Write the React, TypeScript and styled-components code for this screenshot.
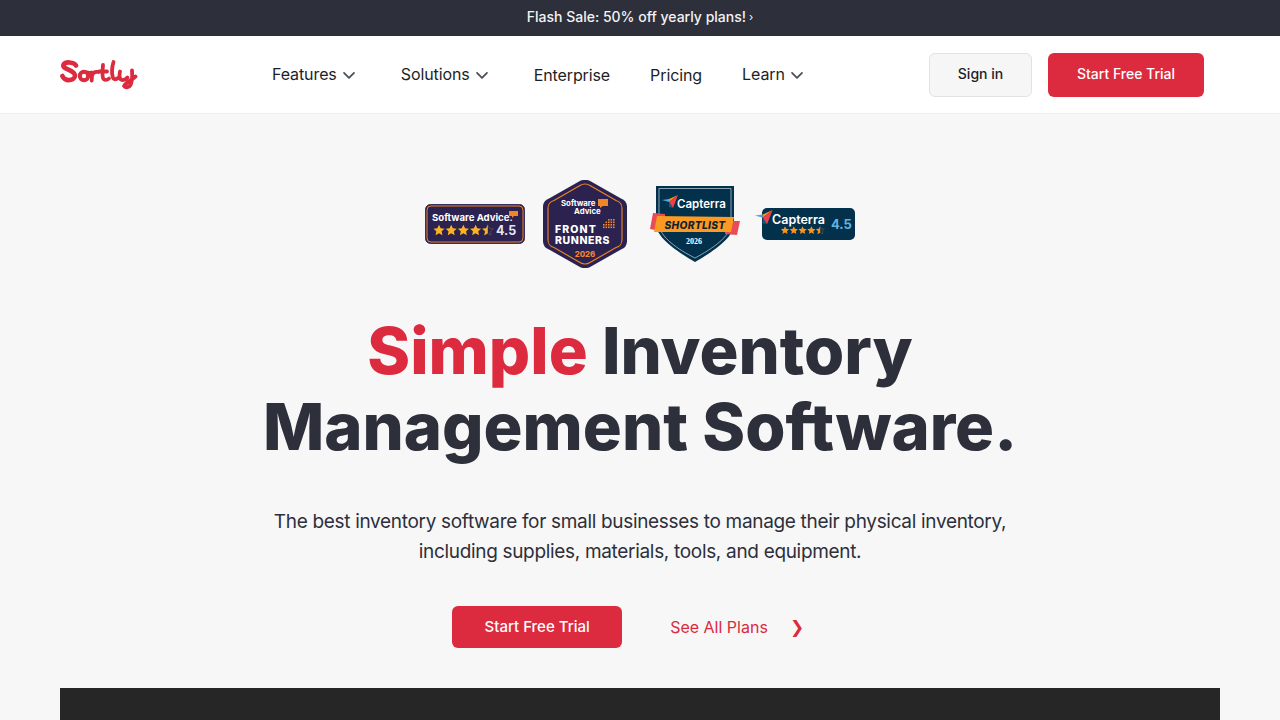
import * as React from 'react';
import styled, { createGlobalStyle } from 'styled-components';

const GlobalStyle = createGlobalStyle`
  html, body {
    margin: 0;
    padding: 0;
    background: #f7f7f7;
    font-family: Inter, "Liberation Sans", sans-serif;
    overflow: hidden;
  }
`;

const Chevron = () => (
  <ChevronIcon viewBox="0 0 16 16" fill="none">
    <path d="M3 5.8l5 5 5-5" stroke="#4a4c57" strokeWidth="1.7" strokeLinecap="round" strokeLinejoin="round" />
  </ChevronIcon>
);

const Logo = () => (
  <LogoSvg viewBox="0 0 78 32" fill="none" stroke="#dc2a3e" strokeLinecap="round" strokeLinejoin="round">
    <path strokeWidth="4.600" d="M16 6.500C14 2.800 5 2.200 3.400 6 1.900 10.200 15 11 15 16.500 15 22 5 23 2.400 17" />
    <circle strokeWidth="4" cx="24" cy="17" r="4.200" />
    <path strokeWidth="3.800" d="M28 13.500c1.500.6 3 .4 3.500 0 .6 2 .6 5 .2 8M32 16.500c1-3 3-4 6-3.500" />
    <path strokeWidth="3.800" d="M43 6c-.5 5-1 10 0 13 .8 2.500 4 2.500 6 .5M39 12.500h8" />
    <path strokeWidth="3.800" d="M53.500 3c-1.500 5-1.800 11-.8 15 .6 2.500 3 3 5.300 1" />
    <path strokeWidth="3.800" d="M60 12.500c-.6 3-.8 6 .4 7.500 1.400 1.800 5 1.200 7-1.500M72 11.500c.4 6 .2 11-1.500 14.500-1.500 2.800-5.500 3-6.500 1 1.500-3 6.500-5 11.500-9.500" />
  </LogoSvg>
);

const Star = ({ x, y, r, fill, outline }: { x: number; y: number; r: number; fill: string; outline?: string }) => {
  const pts = Array.from({ length: 10 }, (_, i) => {
    const a = -Math.PI / 2 + (i * Math.PI) / 5;
    const d = i % 2 === 0 ? r : r * 0.48;
    return `${(x + d * Math.cos(a)).toFixed(2)},${(y + d * Math.sin(a)).toFixed(2)}`;
  }).join(' ');
  return <polygon points={pts} fill={fill} stroke={outline} strokeWidth={outline ? 0.6 : 0} />;
};

const Stars = ({ x, y, r, step, fill }: { x: number; y: number; r: number; step: number; fill: string }) => (
  <>
    {[0, 1, 2, 3].map((i) => (
      <Star key={i} x={x + i * step} y={y} r={r} fill={fill} />
    ))}
    <Star x={x + 4 * step} y={y} r={r} fill="none" outline="#6b5a48" />
    <clipPath id={`half-${x}`}>
      <rect x={x + 4 * step - r} y={y - r} width={r} height={r * 2} />
    </clipPath>
    <g clipPath={`url(#half-${x})`}>
      <Star x={x + 4 * step} y={y} r={r} fill={fill} />
    </g>
  </>
);

const SoftwareAdviceBadge = () => (
  <svg width="100" height="40" viewBox="0 0 100 40">
    <rect x="0.500" y="0.500" width="99" height="39" rx="5" fill="#2b2250" stroke="#3a3060" />
    <rect x="2" y="2" width="96" height="36" rx="4" fill="none" stroke="#f0862a" strokeWidth="1" />
    <text x="7" y="17" fontFamily="Inter" fontWeight="700" fontSize="9.600" fill="#fff">Software Advice.</text>
    <path d="M84 7h9v5h-4l-2 2v-2h-3z" fill="#f0862a" />
    <Stars x={14} y={26.500} r={5.800} step={12.200} fill="#fbb324" />
    <text x="71" y="31" fontFamily="Inter" fontWeight="700" fontSize="12.500" fill="#e9e6ef">4.5</text>
  </svg>
);

const FrontRunnersBadge = () => (
  <svg width="84" height="88" viewBox="0 0 84 88">
    <path d="M36 1.500a12 12 0 0 1 12 0l30 17a9 9 0 0 1 6 8v35a9 9 0 0 1-6 8L48 86.500a12 12 0 0 1-12 0L6 69.500a9 9 0 0 1-6-8v-35a9 9 0 0 1 6-8z" fill="#2b2250" />
    <path d="M37 5.500a10 10 0 0 1 10 0l26 15a8 8 0 0 1 6 8v31a8 8 0 0 1-6 8L47 82.500a10 10 0 0 1-10 0L11 67.500a8 8 0 0 1-6-8v-31a8 8 0 0 1 6-8z" fill="none" stroke="#f0862a" strokeWidth="1.100" />
    <text x="18" y="26" fontFamily="Inter" fontWeight="700" fontSize="7.800" fill="#fff">Software</text>
    <text x="31" y="34" fontFamily="Inter" fontWeight="700" fontSize="7.800" fill="#fff">Advice</text>
    <path d="M55 19h10v7h-5l-3 2v-2h-2z" fill="#f0862a" />
    <text x="12" y="53" fontFamily="Inter" fontWeight="800" fontSize="10.500" letterSpacing="1.100" fill="#fff">FRONT</text>
    <text x="12" y="64" fontFamily="Inter" fontWeight="800" fontSize="10.500" letterSpacing=".6" fill="#fff">RUNNERS</text>
    <g fill="#f0862a">
      {[0, 1, 2, 3, 4].map((c) =>
        [0, 1, 2, 3].map((r) => (c + r > 1 ? <rect key={`${c}${r}`} x={60 + c * 2.500} y={39 + r * 2.500} width="1.600" height="1.600" /> : null)),
      )}
    </g>
    <text x="42" y="77" textAnchor="middle" fontFamily="Inter" fontWeight="800" fontSize="7.800" fill="#f0862a">2026</text>
  </svg>
);

const CapterraArrow = ({ x, y, s }: { x: number; y: number; s: number }) => (
  <g transform={`translate(${x} ${y}) scale(${s})`}>
    <path d="M0 5l7-1v3z" fill="#51a7d8" />
    <path d="M7 4l9-4-9 7z" fill="#f79520" />
    <path d="M7 7l9-7-5 13z" fill="#ef3f4a" />
    <path d="M7 7l4 6-4-1z" fill="#1c5a7d" />
  </g>
);

const ShortlistBadge = () => (
  <svg width="90" height="76" viewBox="0 0 90 76">
    <path d="M6 0h78v38c0 14-22 28-39 38C28 66 6 52 6 38z" fill="#03304a" />
    <path d="M9 2.500h72v35c0 13-20 26-36 34.500C29 64 9 51 9 37.500z" fill="none" stroke="#a9c4d2" strokeWidth=".8" />
    <CapterraArrow x={12} y={9} s={1} />
    <text x="27" y="22" fontFamily="Inter" fontWeight="600" fontSize="11.500" fill="#fff">Capterra</text>
    <path d="M3 27l12 1v18l-15-3z" fill="#ea4c57" />
    <path d="M75 35h15l-3 14-12-1z" fill="#ea4c57" />
    <path d="M7 30l77 1-3 15H4z" fill="#fc9a21" />
    <text x="45" y="42.500" textAnchor="middle" fontFamily="Inter" fontWeight="800" fontStyle="italic" fontSize="10.200" letterSpacing=".3" fill="#0d2233">SHORTLIST</text>
    <text x="44" y="58" textAnchor="middle" fontFamily="Liberation Serif" fontWeight="700" fontSize="8" fill="#fff">2026</text>
  </svg>
);

const CapterraRatingBadge = () => (
  <svg width="100" height="34" viewBox="0 0 100 34">
    <rect x="7" y="1" width="93" height="32" rx="5" fill="#03304a" />
    <CapterraArrow x={0} y={3} s={1.100} />
    <text x="17" y="17" fontFamily="Inter" fontWeight="600" fontSize="12.500" fill="#fff">Capterra</text>
    <Stars x={30} y={23.500} r={4.300} step={8.800} fill="#f79520" />
    <text x="76" y="21.500" fontFamily="Inter" fontWeight="700" fontSize="13" fill="#62b4e0">4.5</text>
  </svg>
);

export default function App() {
  return (
    <>
      <GlobalStyle />
      <Promo>
        Flash Sale: 50% off yearly plans! <PromoArrow>›</PromoArrow>
      </Promo>
      <Header>
        <Logo />
        <Nav>
          <MenuItem>Features<Chevron /></MenuItem>
          <MenuItem>Solutions<Chevron /></MenuItem>
          <NavLink>Enterprise</NavLink>
          <NavLink>Pricing</NavLink>
          <MenuItem>Learn<Chevron /></MenuItem>
        </Nav>
        <Actions>
          <SignIn>Sign in</SignIn>
          <TrialSmall>Start Free Trial</TrialSmall>
        </Actions>
      </Header>
      <Hero>
        <Badges>
          <SoftwareAdviceBadge />
          <FrontRunnersBadge />
          <ShortlistBadge />
          <CapterraRatingBadge />
        </Badges>
        <Title>
          <Accent>Simple</Accent> Inventory
          <br />
          Management Software.
        </Title>
        <Lead>
          The best inventory software for small businesses to manage their physical inventory,
          <br />
          including supplies, materials, tools, and equipment.
        </Lead>
        <Cta>
          <TrialLarge>Start Free Trial</TrialLarge>
          <PlansLink>
            See All Plans<PlansArrow>❯</PlansArrow>
          </PlansLink>
        </Cta>
        <VideoPanel />
      </Hero>
    </>
  );
}

const Promo = styled.div`
  height: 36px;
  box-sizing: border-box;
  padding-bottom: 3px;
  background: #2d2f3a;
  color: #f3f3f4;
  display: flex;
  align-items: center;
  justify-content: center;
  gap: 3px;
  font-size: 14px;
  font-weight: 500;
`;
const PromoArrow = styled.span`
  font-size: 11px;
  font-weight: 400;
  line-height: 1;
  margin-top: 2px;
`;
const Header = styled.header`
  height: 77px;
  background: #fff;
  border-bottom: 1px solid #efefef;
  display: flex;
  align-items: center;
  padding: 0 76px 0 60px;
`;
const LogoSvg = styled.svg`
  width: 78px;
  height: 32px;
  display: block;
  margin-top: 1px;
`;
const Nav = styled.nav`
  display: flex;
  align-items: center;
  gap: 40px;
  margin-left: 134px;
  color: #1d1e26;
  font-size: 16px;
  line-height: 24px;
  letter-spacing: -0.1px;
`;
const MenuItem = styled.div`
  display: flex;
  align-items: center;
  gap: 4px;
  margin-top: -2px;
  margin-right: 4px;
`;
const NavLink = styled.a`
  display: block;
`;
const ChevronIcon = styled.svg`
  width: 16px;
  height: 16px;
  margin-top: 3px;
`;
const Actions = styled.div`
  margin-left: auto;
  display: flex;
  gap: 16px;
`;
const SignIn = styled.button`
  width: 103px;
  height: 44px;
  padding: 0 0 3px;
  border: 1px solid #e2e2e2;
  border-radius: 6px;
  background: #f6f6f6;
  color: #1d1e26;
  font: 500 14px Inter, sans-serif;
`;
const TrialSmall = styled.button`
  width: 156px;
  height: 44px;
  padding: 0 0 3px;
  border: 0;
  border-radius: 6px;
  background: #dc2a3e;
  color: #fff;
  font: 500 14px Inter, sans-serif;
`;
const Hero = styled.main`
  display: flex;
  flex-direction: column;
  align-items: center;
  background: #f7f7f7;
  padding-top: 66px;
`;
const Badges = styled.div`
  height: 88px;
  display: flex;
  align-items: center;
  gap: 18px;
  svg { display: block; flex: none; }
  svg:nth-child(3) { margin: 0 -3px 0 5px; }
`;
const Title = styled.h1`
  margin: 45px 0 0;
  font-family: Inter, sans-serif;
  font-size: 65px;
  font-weight: 800;
  line-height: 76px;
  color: #2d2f3a;
  text-align: center;
`;
const Accent = styled.span`
  color: #dc2a3e;
`;
const Lead = styled.p`
  margin: 42px 0 0;
  font-size: 19px;
  line-height: 30px;
  letter-spacing: -0.32px;
  color: #2d2f3a;
  text-align: center;
`;
const Cta = styled.div`
  margin-top: 39px;
  padding-right: 24px;
  display: flex;
  align-items: center;
  gap: 48px;
`;
const TrialLarge = styled.button`
  width: 170px;
  height: 42px;
  padding: 0 0 1px;
  border: 0;
  border-radius: 6px;
  background: #dc2a3e;
  color: #fff;
  font: 500 15px Inter, sans-serif;
`;
const PlansLink = styled.a`
  display: flex;
  align-items: center;
  gap: 22px;
  color: #dc2a3e;
  font-size: 16px;
`;
const PlansArrow = styled.span`
  font-size: 17px;
  line-height: 1;
`;
const VideoPanel = styled.div`
  margin-top: 40px;
  width: 1160px;
  height: 32px;
  background: #262626;
`;
